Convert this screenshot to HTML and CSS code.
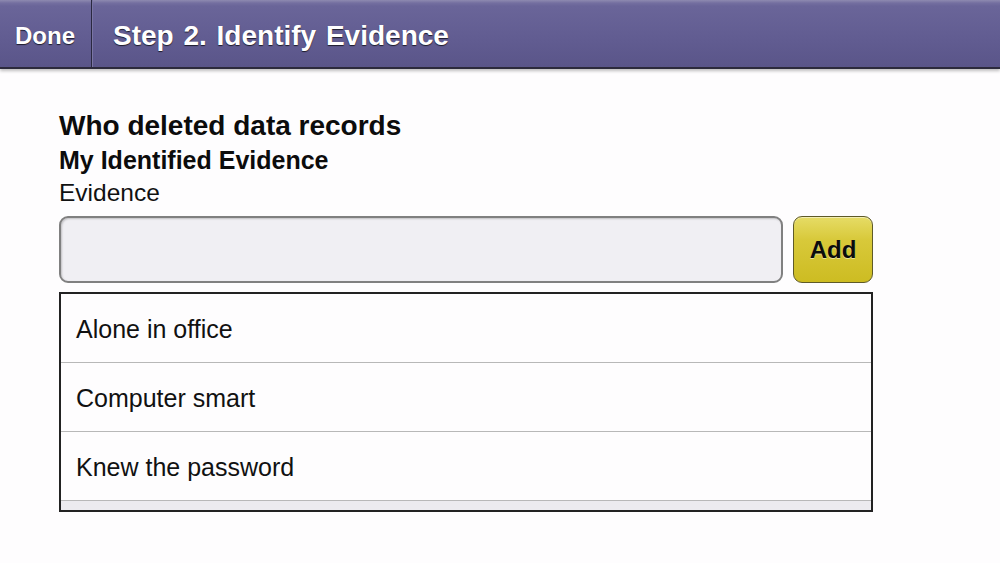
FILE: index.html
```html
<!DOCTYPE html>
<html>
<head>
<meta charset="utf-8">
<link rel="stylesheet" href="styles.css">
</head>
<body>
<header class="topbar">
  <div class="done">Done</div>
  <div class="title">Step 2. Identify Evidence</div>
</header>
<main class="content">
  <h1 class="question">Who deleted data records</h1>
  <h2 class="section">My Identified Evidence</h2>
  <div class="label">Evidence</div>
  <div class="entry">
    <div class="field"></div>
    <div class="add">Add</div>
  </div>
  <div class="list">
    <div class="row">Alone in office</div>
    <div class="row">Computer smart</div>
    <div class="row">Knew the password</div>
    <div class="more"></div>
  </div>
</main>
</body>
</html>
```
FILE: styles.css
```css
html, body {
  margin: 0;
  padding: 0;
  background: #fefdfe;
  font-family: "Liberation Sans", Arial, sans-serif;
  color: #111;
}

.topbar {
  display: flex;
  height: 67px;
  border-bottom: 2px solid #2c2a3c;
  background: linear-gradient(to bottom, #8e8ab0 0px, #746fa0 3px, #6a6599 6px, #615c91 40px, #5a5589 67px);
  box-shadow: 0 2px 3px rgba(0, 0, 0, 0.25);
  color: #fff;
  font-weight: bold;
  text-shadow: 0 1px 1px rgba(0, 0, 0, 0.7);
}

.done {
  width: 76px;
  padding-left: 15px;
  border-right: 1px solid #2a2840;
  box-shadow: 1px 0 0 #7a76a4;
  font-size: 24px;
  line-height: 71px;
}

.title {
  padding-left: 21px;
  font-size: 28px;
  line-height: 71px;
  word-spacing: 2px;
}

.content {
  padding: 0 59px;
}

.question {
  margin: 40px 0 0;
  font-size: 28px;
  line-height: 34px;
  font-weight: bold;
  color: #0c0c0c;
}

.section {
  margin: 0;
  font-size: 25px;
  line-height: 34px;
  font-weight: bold;
  color: #0c0c0c;
}

.label {
  font-size: 24.5px;
  line-height: 32px;
}

.entry {
  display: flex;
  gap: 10px;
  margin-top: 7px;
  width: 814px;
}

.field {
  flex: 1;
  height: 63px;
  border: 2px solid #808080;
  border-radius: 9px;
  background: #f0eff3;
  box-shadow: inset 1px 1px 2px rgba(0, 0, 0, 0.2);
}

.add {
  width: 78px;
  height: 65px;
  border: 1px solid #5e5a28;
  border-radius: 9px;
  background: linear-gradient(to bottom, #e6dc66 0%, #d8c93a 35%, #cdbc22 100%);
  box-shadow: inset 0 1px 0 rgba(255, 255, 255, 0.5);
  text-align: center;
  font-size: 24px;
  font-weight: bold;
  line-height: 65px;
  color: #0c0c0c;
  text-shadow: 0 1px 0 rgba(255, 255, 255, 0.5);
}

.list {
  width: 810px;
  margin-top: 9px;
  border: 2px solid #222;
  background: #fefdfe;
}

.row {
  height: 68px;
  line-height: 70px;
  padding-left: 15px;
  border-bottom: 1px solid #b8b8b8;
  font-size: 25px;
}

.more {
  height: 9px;
  background: #ecebef;
}
```
